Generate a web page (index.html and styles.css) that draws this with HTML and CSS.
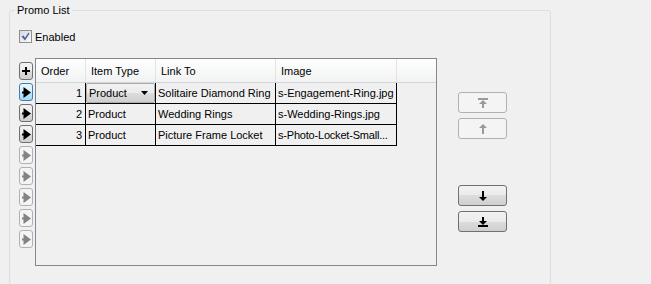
FILE: index.html
```html
<!DOCTYPE html>
<html lang="en">
<head>
    <meta charset="UTF-8">
    <title>Promo List</title>
    <link rel="stylesheet" href="styles.css">
</head>
<body>
    <fieldset class="group">
        <legend class="group-title">Promo List</legend>
        <label class="check">
            <span class="check-box">
                <svg width="9" height="9" viewBox="0 0 9 9"><path d="M0.5 4.5l2 -1 1.5 2.2L7.5 0.5l1 1-4.5 7z" fill="#4a5f96"/></svg>
            </span>
            <span>Enabled</span>
        </label>

        <div class="editor">
            <div class="row-buttons">
                <button class="row-btn">
                    <svg width="8" height="8" viewBox="0 0 8 8"><path d="M3 0h2v3h3v2H5v3H3V5H0V3h3z"/></svg>
                </button>
                <button class="row-btn current"><svg class="pointer" viewBox="0 0 9 11"><path d="M0 4.5h1.5V0L9 5.5 1.5 11V6.5H0z"/></svg></button>
                <button class="row-btn"><svg class="pointer" viewBox="0 0 9 11"><path d="M0 4.5h1.5V0L9 5.5 1.5 11V6.5H0z"/></svg></button>
                <button class="row-btn"><svg class="pointer" viewBox="0 0 9 11"><path d="M0 4.5h1.5V0L9 5.5 1.5 11V6.5H0z"/></svg></button>
                <button class="row-btn off"><svg class="pointer" viewBox="0 0 9 11"><path d="M0 4.5h1.5V0L9 5.5 1.5 11V6.5H0z"/></svg></button>
                <button class="row-btn off"><svg class="pointer" viewBox="0 0 9 11"><path d="M0 4.5h1.5V0L9 5.5 1.5 11V6.5H0z"/></svg></button>
                <button class="row-btn off"><svg class="pointer" viewBox="0 0 9 11"><path d="M0 4.5h1.5V0L9 5.5 1.5 11V6.5H0z"/></svg></button>
                <button class="row-btn off"><svg class="pointer" viewBox="0 0 9 11"><path d="M0 4.5h1.5V0L9 5.5 1.5 11V6.5H0z"/></svg></button>
                <button class="row-btn off"><svg class="pointer" viewBox="0 0 9 11"><path d="M0 4.5h1.5V0L9 5.5 1.5 11V6.5H0z"/></svg></button>
            </div>

            <div class="grid">
                <table class="promo-table">
                    <thead>
                        <tr>
                            <th class="col-order">Order</th>
                            <th class="col-type">Item Type</th>
                            <th class="col-link">Link To</th>
                            <th class="col-image">Image</th>
                            <th class="fill"></th>
                        </tr>
                    </thead>
                    <tbody>
                        <tr>
                            <td class="num">1</td>
                            <td class="combo-cell">
                                <div class="combo">
                                    <span>Product</span>
                                    <svg width="7" height="4" viewBox="0 0 7 4"><path d="M0 0h7L3.5 4z"/></svg>
                                </div>
                            </td>
                            <td>Solitaire Diamond Ring</td>
                            <td>s-Engagement-Ring.jpg</td>
                            <td class="fill"></td>
                        </tr>
                        <tr>
                            <td class="num">2</td>
                            <td>Product</td>
                            <td>Wedding Rings</td>
                            <td>s-Wedding-Rings.jpg</td>
                            <td class="fill"></td>
                        </tr>
                        <tr>
                            <td class="num">3</td>
                            <td>Product</td>
                            <td>Picture Frame Locket</td>
                            <td class="short">s-Photo-Locket-Small...</td>
                            <td class="fill"></td>
                        </tr>
                    </tbody>
                </table>
            </div>

            <div class="move-buttons">
                <button class="move-btn off" disabled>
                    <svg width="10" height="10" viewBox="0 0 10 10"><path d="M0 0h10v2H0zM5 2l4 4H6v4H4V6H1z"/></svg>
                </button>
                <button class="move-btn off" disabled>
                    <svg width="10" height="10" viewBox="0 0 10 10"><path d="M5 0l4 4H6v6H4V4H1z"/></svg>
                </button>
                <button class="move-btn down-group">
                    <svg width="10" height="10" viewBox="0 0 10 10"><path d="M4 0h2v6h3l-4 4-4-4h3z"/></svg>
                </button>
                <button class="move-btn">
                    <svg width="10" height="10" viewBox="0 0 10 10"><path d="M4 0h2v4h3l-4 4-4-4h3zM0 8h10v2H0z"/></svg>
                </button>
            </div>
        </div>
    </fieldset>
</body>
</html>
```

FILE: styles.css
```css
* {
    box-sizing: border-box;
}
html, body {
    margin: 0;
    height: 100%;
    overflow: hidden;
    background-color: #f0f0f0;
}
body {
    font-family: "Liberation Sans", Arial, sans-serif;
    font-size: 11px;
    color: #000;
}
button {
    font: inherit;
    margin: 0;
    padding: 0;
    cursor: default;
}

.group {
    margin: 4px 0 0 9px;
    width: 542px;
    height: 281px;
    min-width: 0;
    padding: 0 0 0 9px;
    border: 1px solid #d5dfe5;
    border-radius: 3px;
}
.group-title {
    margin-left: -4px;
    padding: 0 2px;
    line-height: 13px;
}

.check {
    display: flex;
    align-items: center;
    gap: 3px;
    height: 13px;
    margin-top: 13px;
}
.check-box {
    display: flex;
    align-items: center;
    justify-content: center;
    width: 13px;
    height: 13px;
    border: 1px solid #8e8f8f;
    background: linear-gradient(135deg, #d4d8e0, #fbfbfb);
}

.editor {
    display: flex;
    align-items: flex-start;
    margin-top: 15px;
}

.row-buttons {
    display: flex;
    flex-direction: column;
    gap: 3px;
    width: 14px;
    margin: 4px 2px 0 0;
}
.row-btn {
    display: flex;
    align-items: center;
    justify-content: center;
    width: 14px;
    height: 18px;
    border: 1px solid #707070;
    border-radius: 3px;
    background: linear-gradient(#f2f2f2 0%, #ebebeb 50%, #dddddd 50%, #cfcfcf 100%);
    color: #000;
}
.row-btn.current {
    border-color: #3c7fb1;
    background: linear-gradient(#eaf6fd 0%, #d9f0fc 50%, #bee6fd 50%, #a7d9f5 100%);
}
.row-btn.off {
    border-color: #adb2b5;
    background: #f4f4f4;
    color: #838383;
}
.row-btn svg {
    fill: currentColor;
}
.pointer {
    width: 9px;
    height: 11px;
}

.grid {
    width: 402px;
    height: 208px;
    border: 1px solid #828790;
    overflow: hidden;
}
.promo-table {
    width: 100%;
    border-collapse: separate;
    border-spacing: 0;
    table-layout: fixed;
}
.promo-table th {
    height: 24px;
    padding: 0 5px;
    font-weight: normal;
    text-align: left;
    border-right: 1px solid #e3e3e3;
    border-bottom: 1px solid #d5d5d5;
    background: linear-gradient(#ffffff, #f1f2f3);
}
.promo-table th.fill {
    border-right: none;
}
.col-order {
    width: 50px;
}
.col-type {
    width: 70px;
}
.col-link {
    width: 120px;
}
.col-image {
    width: 121px;
}
.promo-table td {
    height: 21px;
    padding: 0 2px;
    border-right: 1px solid #000;
    border-bottom: 1px solid #000;
    white-space: nowrap;
    overflow: hidden;
}
.promo-table td.short {
    padding-right: 0;
    letter-spacing: -0.2px;
}
.promo-table td.num {
    text-align: right;
    padding-right: 3px;
}
.promo-table td.fill {
    border: none;
}
.promo-table td.combo-cell {
    padding: 0;
}
.combo {
    display: flex;
    align-items: center;
    justify-content: space-between;
    height: 20px;
    padding: 0 6px 0 2px;
    border: 1px solid #acacac;
    border-radius: 2px;
    background: linear-gradient(#f2f2f2 0%, #ebebeb 50%, #dddddd 50%, #cfcfcf 100%);
}

.move-buttons {
    display: flex;
    flex-direction: column;
    gap: 5px;
    margin: 34px 0 0 21px;
}
.move-btn {
    display: flex;
    align-items: center;
    justify-content: center;
    width: 49px;
    height: 21px;
    border: 1px solid #707070;
    border-radius: 3px;
    background: linear-gradient(#f2f2f2 0%, #ebebeb 50%, #dddddd 50%, #cfcfcf 100%);
    color: #000;
}
.move-btn.off {
    border-color: #adb2b5;
    background: #f4f4f4;
    color: #9a9a9a;
}
.move-btn.down-group {
    margin-top: 41px;
}
.move-btn svg {
    fill: currentColor;
}
```
